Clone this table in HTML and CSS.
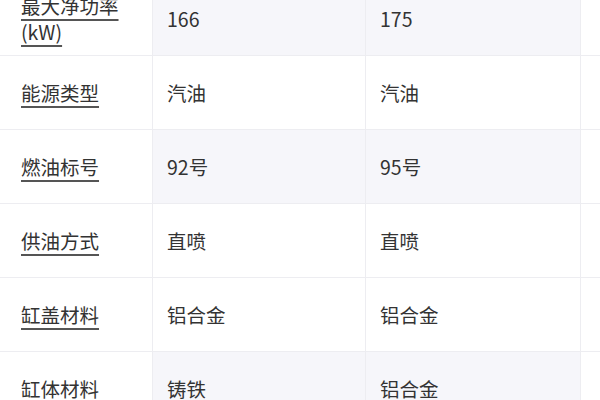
FILE: index.html
```html
<!DOCTYPE html>
<html lang="zh-CN">
<head>
<meta charset="utf-8">
<title>参数对比</title>
<link rel="stylesheet" href="styles.css">
</head>
<body>
<div class="table">
  <div class="row">
    <div class="cell label"><span class="term">最大净功率<br>(kW)</span></div>
    <div class="cell value diff">166</div>
    <div class="cell value diff">175</div>
    <div class="cell extra"></div>
  </div>
  <div class="row">
    <div class="cell label"><span class="term">能源类型</span></div>
    <div class="cell value">汽油</div>
    <div class="cell value">汽油</div>
    <div class="cell extra"></div>
  </div>
  <div class="row">
    <div class="cell label"><span class="term">燃油标号</span></div>
    <div class="cell value diff">92号</div>
    <div class="cell value diff">95号</div>
    <div class="cell extra"></div>
  </div>
  <div class="row">
    <div class="cell label"><span class="term">供油方式</span></div>
    <div class="cell value">直喷</div>
    <div class="cell value">直喷</div>
    <div class="cell extra"></div>
  </div>
  <div class="row">
    <div class="cell label"><span class="term">缸盖材料</span></div>
    <div class="cell value">铝合金</div>
    <div class="cell value">铝合金</div>
    <div class="cell extra"></div>
  </div>
  <div class="row">
    <div class="cell label"><span class="term">缸体材料</span></div>
    <div class="cell value diff">铸铁</div>
    <div class="cell value diff">铝合金</div>
    <div class="cell extra"></div>
  </div>
</div>
</body>
</html>
```
FILE: styles.css
```css
html, body {
  margin: 0;
  padding: 0;
  background: #ffffff;
  overflow: hidden;
}
body {
  width: 600px;
  height: 400px;
  font-family: "Noto Sans CJK SC", "Noto Sans", sans-serif;
  font-size: 19.5px;
  color: #333333;
}
.table {
  margin-top: -18px;
}
.row {
  display: grid;
  grid-template-columns: 153px 213px 215px 1fr;
  height: 74px;
  box-sizing: border-box;
  border-bottom: 1px solid #ededf1;
}
.cell {
  box-sizing: border-box;
  display: flex;
  align-items: center;
  border-right: 1px solid #ededf1;
  line-height: 26px;
}
.cell.extra {
  border-right: none;
}
.label {
  padding-left: 21px;
}
.value {
  padding-left: 14px;
}
.diff {
  background: #f6f6fa;
}
.term {
  text-decoration: underline;
  text-decoration-color: #555555;
  text-decoration-thickness: 1.5px;
  text-underline-offset: 5px;
}
```
